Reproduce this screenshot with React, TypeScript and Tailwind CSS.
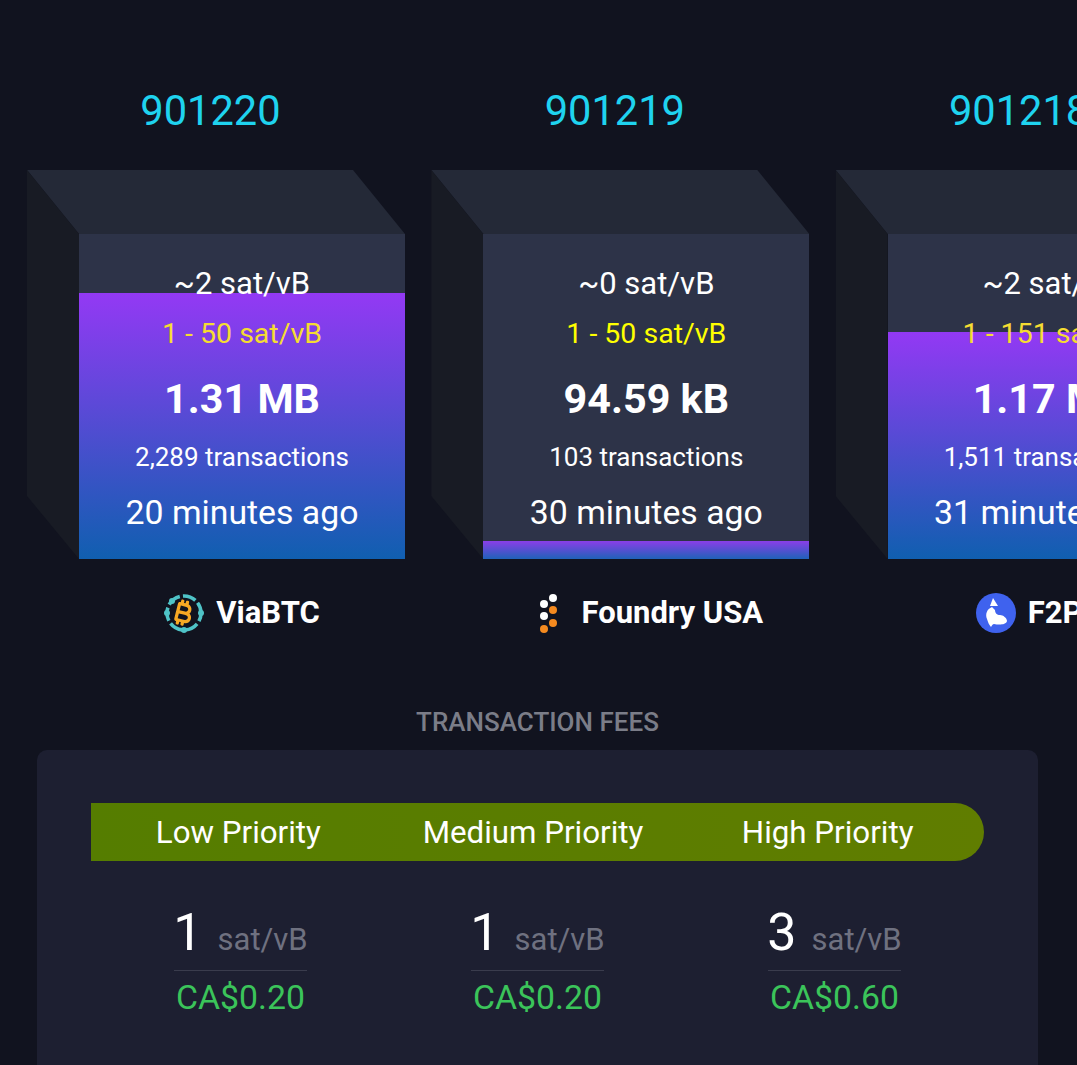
import React from "react";
import { FaBitcoinSign } from "react-icons/fa6";

const ViaIcon = () => (
  <div className="relative w-10 h-10 flex items-center justify-center">
    <svg viewBox="0 0 40 40" className="absolute inset-0 w-10 h-10">
      <circle cx="20" cy="20" r="17" fill="none" stroke="#4fc3c7" strokeWidth="3.6" strokeDasharray="13.5 3.2" strokeDashoffset="5" />
      <circle cx="8" cy="8" r="3" fill="#4fc3c7" />
      <circle cx="20" cy="37" r="3" fill="#4fc3c7" />
      <circle cx="3" cy="20" r="3" fill="#4fc3c7" />
      <circle cx="37" cy="20" r="3" fill="#4fc3c7" />
    </svg>
    <FaBitcoinSign className="w-[18px] h-[26px] text-[#f7a823] rotate-[14deg]" />
  </div>
);

const FoundryIcon = () => (
  <svg viewBox="0 0 40 40" className="w-10 h-10">
    <circle cx="24" cy="5" r="4" fill="#ffffff" />
    <circle cx="15" cy="11" r="4" fill="#ffffff" />
    <circle cx="24" cy="17" r="4" fill="#f58a1f" />
    <circle cx="15" cy="23" r="4" fill="#ffffff" />
    <circle cx="24" cy="30" r="4" fill="#f58a1f" />
    <circle cx="15" cy="36" r="4" fill="#f58a1f" />
  </svg>
);

const F2Icon = () => (
  <svg viewBox="0 0 40 40" className="w-10 h-10">
    <circle cx="20" cy="20" r="20" fill="#3f62ee" />
    <path d="M17 5 L22 13 L14 13 Z" fill="#ffffff" />
    <path d="M16 14 C11 16 9 21 11 26 C12 29 13 32 15 34 C16 32 17 31 18 31 C23 32 30 32 31 28 C31 25 27 22 24 22 C21 22 19 20 19 17 Z" fill="#ffffff" />
  </svg>
);

type BlockProps = {
  height: string;
  median: string;
  range: string;
  rangeColor: string;
  size: string;
  txs: string;
  ago: string;
  fill: React.ReactNode;
  miner: string;
  icon: React.ReactNode;
};

const Block = ({ height, median, range, rangeColor, size, txs, ago, fill, miner, icon }: BlockProps) => (
  <div className="w-[378px] shrink-0 flex flex-col">
    <div className="text-center text-[41.6px] leading-[50px] text-[#1fd3ef] mr-[11px]">{height}</div>
    <div className="relative mt-[34px] h-[389px] pt-[64px] pl-[52px]">
      <div className="absolute inset-0 bg-[#242937] [clip-path:polygon(0_0,326px_0,378px_64px,52px_64px)]" />
      <div className="absolute inset-0 bg-[#181b24] [clip-path:polygon(0_0,52px_64px,52px_389px,0_326px)]" />
      <div className="relative w-[326px] h-[325px] bg-[#2d3348] overflow-hidden text-center text-white pt-[25px] whitespace-nowrap">
        {fill}
        <div className="relative text-[31px] leading-[50px]">{median}</div>
        <div className={`relative text-[28.5px] leading-[50px] ${rangeColor}`}>{range}</div>
        <div className="relative text-[41.3px] leading-[80px] font-bold">{size}</div>
        <div className="relative text-[26px] leading-[36px]">{txs}</div>
        <div className="relative text-[33.8px] leading-[76px]">{ago}</div>
      </div>
    </div>
    <div className="mt-[28px] ml-[52px] w-[326px] flex items-center justify-center gap-3 whitespace-nowrap">
      {icon}
      <span className="text-[31px] leading-[52px] font-bold text-white">{miner}</span>
    </div>
  </div>
);

const Fee = ({ value, fiat }: { value: string; fiat: string }) => (
  <div className="w-[133px] flex flex-col items-center">
    <div className="w-full h-[70px] flex items-baseline justify-center gap-[15px] border-b border-[#3a3c4d]">
      <span className="text-[52px] leading-[64px] text-white">{value}</span>
      <span className="text-[31px] text-[#6f7180]">sat/vB</span>
    </div>
    <div className="text-[33.8px] leading-[53px] text-[#3bc45a]">{fiat}</div>
  </div>
);

export default function App() {
  return (
    <div className="h-[1065px] w-[1077px] overflow-hidden bg-[#11131f] pt-[86px] font-['Roboto',sans-serif]">
      <div className="flex gap-[26.3px] pl-[27px]">
        <Block
          height="901220"
          median="~2 sat/vB"
          range="1 - 50 sat/vB"
          rangeColor="text-[#f5dc32]"
          size="1.31 MB"
          txs="2,289 transactions"
          ago="20 minutes ago"
          miner="ViaBTC"
          icon={<ViaIcon />}
          fill={<div className="absolute left-0 right-0 bottom-0 h-[266px] bg-[linear-gradient(#9339f4,#105fb0)]" />}
        />
        <Block
          height="901219"
          median="~0 sat/vB"
          range="1 - 50 sat/vB"
          rangeColor="text-[#ffff00]"
          size="94.59 kB"
          txs="103 transactions"
          ago="30 minutes ago"
          miner="Foundry USA"
          icon={<FoundryIcon />}
          fill={<div className="absolute left-0 right-0 bottom-0 h-[18px] bg-[linear-gradient(#8a3ee8,#1f62b8)]" />}
        />
        <Block
          height="901218"
          median="~2 sat/vB"
          range="1 - 151 sat/vB"
          rangeColor="text-[#f5dc32]"
          size="1.17 MB"
          txs="1,511 transactions"
          ago="31 minutes ago"
          miner="F2Pool"
          icon={<F2Icon />}
          fill={<div className="absolute left-0 right-0 bottom-0 h-[227px] bg-[linear-gradient(#9339f4,#105fb0)]" />}
        />
      </div>
      <div className="mt-[65px] text-center text-[26px] leading-[36px] font-medium text-[#7b7d88] pr-[2px]">TRANSACTION FEES</div>
      <div className="ml-[37px] mr-[39px] mt-[10px] h-[400px] rounded-t-[10px] bg-[#1d1f31] px-[54px] pt-[53px]">
        <div className="grid grid-cols-3 h-[58px] rounded-r-[29px] bg-[linear-gradient(90deg,#557d00,#607d00)] items-center text-center text-[31.3px] leading-[60px] text-white pr-[9px]">
          <span>Low Priority</span>
          <span>Medium Priority</span>
          <span>High Priority</span>
        </div>
        <div className="flex gap-[164px] pl-[83px] mt-[40px]">
          <Fee value="1" fiat="CA$0.20" />
          <Fee value="1" fiat="CA$0.20" />
          <Fee value="3" fiat="CA$0.60" />
        </div>
      </div>
    </div>
  );
}
